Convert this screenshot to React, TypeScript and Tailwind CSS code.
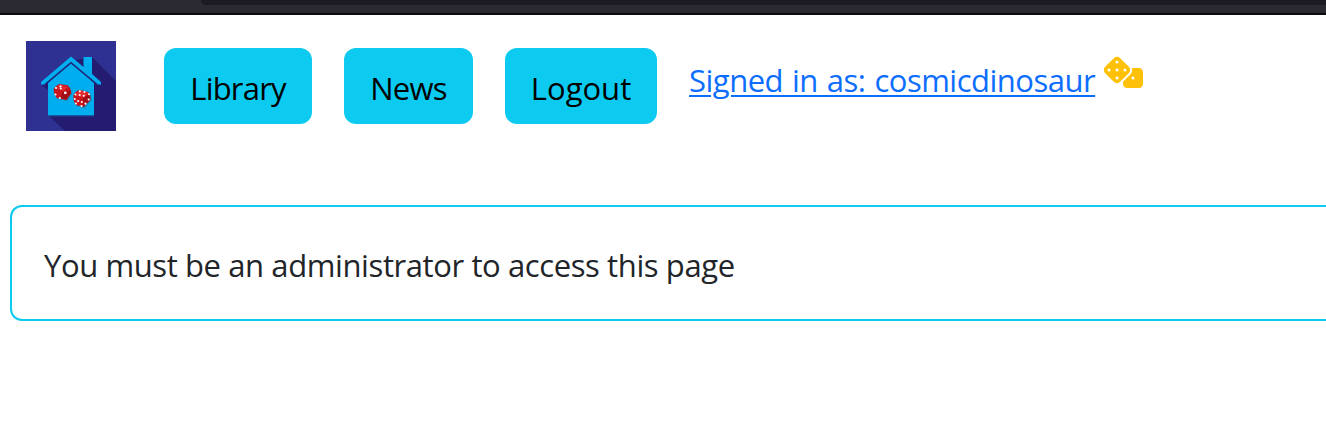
import { FaDice } from "react-icons/fa6";

const font = "font-['Segoe_UI','Open_Sans','Noto_Sans',sans-serif]";

function Logo() {
  return (
    <svg viewBox="0 0 90 90" className="block size-[90px] shrink-0" aria-hidden="true">
      <rect width="90" height="90" fill="#2e3192" />
      <path d="M66 16 L90 40 V90 H39 L22 74 V49 L16 44 L45 20 Z" fill="#241c70" />
      <path d="M45 22.5 L68 42 V74.5 H22 V42 Z" fill="#00aeef" />
      <path d="M45 15.5 L57.5 26 V16 H66 V33 L75 41 V43.5 H71.5 L45 21 L18.5 43.5 H15 V41 Z" fill="#00aeef" />
      <path d="M18.5 43.8 L45 21.6 L71.5 43.8" fill="none" stroke="#1d2f80" strokeWidth="1.4" />
      <path d="M22 75 H68" stroke="#17498f" strokeWidth="0.8" />
      <g>
        <path d="M28.5 48 L34 43.5 L43 45 L45.5 52 L40.5 59 L31 57 Z" transform="translate(.8 1)" fill="#2575a5" opacity=".55" />
        <path d="M27.8 47.5 Q29.5 44.5 33.5 43 L41.5 44.2 Q44.8 47 45.2 52 L40.5 59 L31 57.3 Q27.3 53 27.8 47.5 Z" fill="#c9151b" />
        <path d="M36.5 51 L44.5 49 L45 52 L40.5 58.5 L34.5 57.5 Z" fill="#a20d17" />
        <path d="M29.5 47 L35 44 L42 46 L37 50 Z" fill="#e32b2f" />
        <g fill="#fff">
          <circle cx="34.5" cy="45.3" r="1.1" /><circle cx="30" cy="47" r="1" /><circle cx="34.8" cy="47.5" r="1" />
          <circle cx="39.3" cy="51.8" r="1.4" /><circle cx="29.5" cy="53.5" r="1.1" /><circle cx="33.8" cy="57" r="1.1" />
        </g>
      </g>
      <g>
        <path d="M47.5 54 L54 48.5 L63.5 51 L65 58 L58 66.5 L49 64 Z" transform="translate(1 1)" fill="#2575a5" opacity=".55" />
        <path d="M47.5 54 Q50 49.5 54 49 L62 51 Q64.8 53 64.3 59 L57.5 66 L50 64 Q46.8 60 47.5 54 Z" fill="#c9151b" />
        <path d="M57 57 L64 53 L64.3 59 L57.5 66 Z" fill="#a20d17" />
        <path d="M48.5 54 L54 49.5 L63 52 L57 56.5 Z" fill="#e32b2f" />
        <g fill="#fff">
          <circle cx="53.8" cy="50.3" r="1.1" /><circle cx="58.5" cy="51" r="1" /><circle cx="63" cy="53.3" r="1" />
          <circle cx="49.5" cy="53.5" r="1" /><circle cx="53.7" cy="54" r="1" /><circle cx="57.8" cy="54.8" r="1" />
          <circle cx="48.8" cy="58" r="1" /><circle cx="52.2" cy="60" r="1.1" /><circle cx="55.8" cy="61" r="1" />
          <circle cx="50" cy="62.5" r="1" /><circle cx="55.5" cy="65" r="1.1" /><circle cx="59.5" cy="62.7" r="1.1" /><circle cx="62.7" cy="58.5" r="1.1" />
        </g>
      </g>
    </svg>
  );
}

const navItems = [
  { label: "Library", style: "w-[148px] tracking-[-0.8px]" },
  { label: "News", style: "w-[129px] tracking-[-0.7px]" },
  { label: "Logout", style: "w-[152px]" },
];

export default function App() {
  return (
    <div className={`h-[431px] w-full overflow-hidden bg-white text-[31px] leading-[48px] text-[#212529] ${font}`}>
      <div className="h-[15px] border-b-2 border-[#0c0c0d] bg-[#2b2a33] pl-[201px]">
        <div className="h-[5px] rounded-bl-lg bg-[#1c1b22]" />
      </div>
      <header className="flex h-[190px] items-start pt-[26px] pl-[26px]">
        <Logo />
        <nav className="mt-[7px] ml-12 flex gap-8">
          {navItems.map((item) => (
            <a
              key={item.label}
              href="#"
              className={`flex h-[76px] items-center justify-center rounded-xl bg-[#0dcaf0] pt-1 whitespace-nowrap text-black ${item.style}`}
            >
              {item.label}
            </a>
          ))}
        </nav>
        <div className="mt-[15px] ml-8 flex items-start">
          <a
            href="#"
            className="w-[406px] tracking-[-0.5px] whitespace-nowrap text-[#0d6efd] underline decoration-2 underline-offset-[3px] [word-spacing:1.4px]"
          >
            Signed in as: cosmicdinosaur
          </a>
          <FaDice className="ml-2 h-8 w-10 text-[#ffc107]" />
        </div>
      </header>
      <main className="ml-[10px] flex h-[116px] items-center rounded-l-xl border-2 border-r-0 border-[#0dcaf0] pt-1 pl-8">
        <p className="tracking-[-0.4px] whitespace-nowrap">You must be an administrator to access this page</p>
      </main>
    </div>
  );
}
